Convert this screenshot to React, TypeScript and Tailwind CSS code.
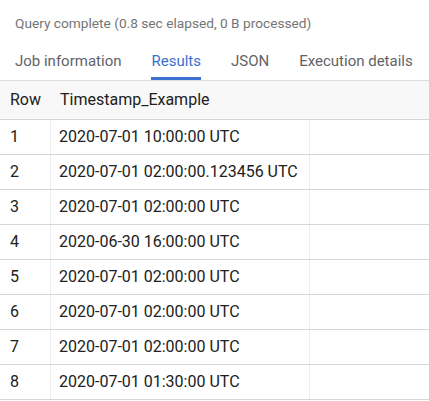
import React from "react";

const rows = [
  "2020-07-01 10:00:00 UTC",
  "2020-07-01 02:00:00.123456 UTC",
  "2020-07-01 02:00:00 UTC",
  "2020-06-30 16:00:00 UTC",
  "2020-07-01 02:00:00 UTC",
  "2020-07-01 02:00:00 UTC",
  "2020-07-01 02:00:00 UTC",
  "2020-07-01 01:30:00 UTC",
];

const tabs = ["Job information", "Results", "JSON", "Execution details"];

export default function App() {
  return (
    <div className="h-[401px] w-[429px] overflow-hidden bg-white font-['Roboto',sans-serif]">
      <div className="flex h-[46px] items-center whitespace-nowrap pl-[15px] text-[13.7px] text-[#757575]">
        Query complete (0.8 sec elapsed, 0 B processed)
      </div>

      <div className="flex h-[35px] gap-[30px] whitespace-nowrap border-b border-[#dadce0] pl-[15px] text-[15px]">
        {tabs.map((t) => (
          <div
            key={t}
            className={`flex shrink-0 flex-col justify-between ${
              t === "Results" ? "text-[#3b6fd0]" : "text-[#5f6368]"
            }`}
          >
            <span className="pt-[5px] leading-[20px]">{t}</span>
            <span className={`h-[3px] ${t === "Results" ? "bg-[#3b6fd0]" : ""}`} />
          </div>
        ))}
      </div>

      <div className="flex h-[39px] items-center border-b border-[#d5d5d5] bg-[#f8f8f8] text-[16px] text-[#212121]">
        <div className="w-[50px] pl-[10px]">Row</div>
        <div className="pl-[10px]">Timestamp_Example</div>
      </div>

      {rows.map((r, i) => (
        <div
          key={i}
          className="flex h-[35px] border-b border-[#d5d5d5] text-[16px] text-[#212121]"
        >
          <div className="flex w-[51px] items-center border-r border-[#ececec] pl-[10px]">
            {i + 1}
          </div>
          <div className="flex w-[259px] items-center whitespace-nowrap border-r border-[#ececec] pl-[8px]">
            {r}
          </div>
          <div className="flex-1" />
        </div>
      ))}
    </div>
  );
}
